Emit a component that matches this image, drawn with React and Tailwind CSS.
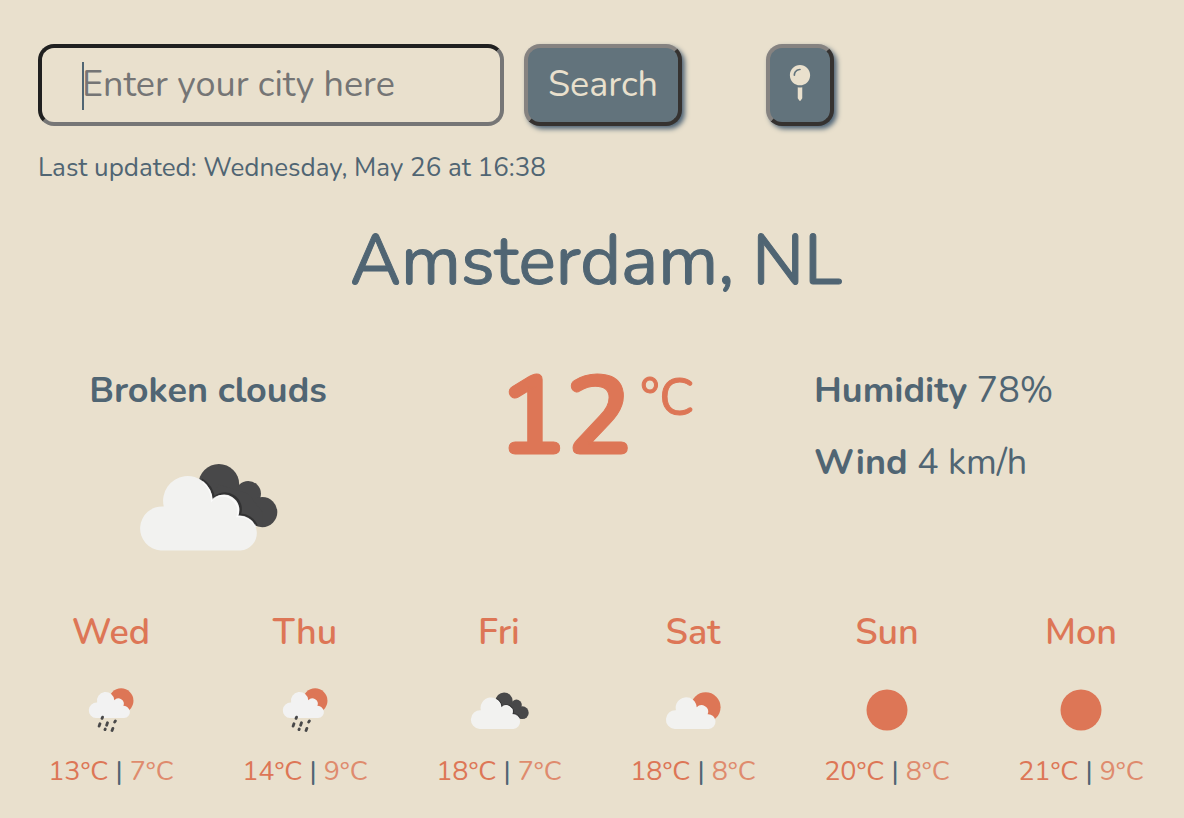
import { FaMapPin } from "react-icons/fa";

const forecast = [
  { day: "Wed", icon: "rain", max: 13, min: 7 },
  { day: "Thu", icon: "rain", max: 14, min: 9 },
  { day: "Fri", icon: "clouds", max: 18, min: 7 },
  { day: "Sat", icon: "partly", max: 18, min: 8 },
  { day: "Sun", icon: "sun", max: 20, min: 8 },
  { day: "Mon", icon: "sun", max: 21, min: 9 },
];

const cloudPath =
  "M126 300A66 66 0 1 1 135 168A74 74 0 1 1 281 148A46 46 0 0 1 358 196A52 52 0 1 1 365 300Z";

function Clouds({ className }) {
  return (
    <svg viewBox="58 38 419 264" className={className} role="img" aria-label="Broken clouds">
      <circle cx="300" cy="102" r="61" fill="#484849" />
      <circle cx="388" cy="130" r="38" fill="#484849" />
      <circle cx="430" cy="185" r="45" fill="#484849" />
      <path d="M300 102L388 130L430 185V229L380 210L270 150Z" fill="#484849" />
      <path d="M248 88A74 74 0 0 1 284 146A46 46 0 0 1 361 194A52 52 0 0 1 412 226" fill="none" stroke="#242425" strokeOpacity="0.6" strokeWidth="9" />
      <path d={cloudPath} fill="#f2f2f0" />
      <path d="M252 95A72 72 0 0 1 279 150A46 46 0 0 1 355 198A52 52 0 0 1 410 230" fill="none" stroke="#ffffff" strokeOpacity="0.7" strokeWidth="5" />
    </svg>
  );
}

function PartlyCloudy({ className }) {
  return (
    <svg viewBox="58 40 394 262" className={className} role="img" aria-label="Partly cloudy">
      <circle cx="344" cy="147" r="105" fill="#dd7656" />
      <path d={cloudPath} fill="#f2f2f0" />
    </svg>
  );
}

function Rain({ className }) {
  return (
    <svg viewBox="58 44 390 374" className={className} role="img" aria-label="Rain">
      <circle cx="339" cy="152" r="105" fill="#dd7656" />
      <path d={cloudPath} fill="#f2f2f2" />
      <g stroke="#484849" strokeWidth="24" strokeLinecap="round">
        <path d="M181 292L177 302M159 348L152 368M223 340L216 360M290 324L284 334M204 393L202 398M269 387L262 405" />
      </g>
    </svg>
  );
}

function Sun({ className }) {
  return (
    <svg viewBox="0 0 42 42" className={className} role="img" aria-label="Clear sky">
      <circle cx="21" cy="21" r="20.5" fill="#dd7656" />
    </svg>
  );
}

function DayIcon({ name }) {
  if (name === "rain") return <Rain className="h-11 w-12" />;
  if (name === "clouds") return <Clouds className="w-[59px]" />;
  if (name === "partly") return <PartlyCloudy className="w-14" />;
  return <Sun className="w-[42px]" />;
}

const buttonClass =
  "flex h-[82px] items-center justify-center rounded-2xl border-4 border-t-[#868381] border-l-[#868381] border-r-[#353230] border-b-[#353230] bg-[#62737c] text-[36px] text-[#e9e0cd] shadow-[3px_3px_5px_#4f6476]";

export default function App() {
  return (
    <main className="min-h-screen bg-[#e9e0cd] pt-11 pr-1.5 pb-6 pl-3.5 font-['Nunito','Lato',sans-serif] text-[#506573]">
      <form className="flex px-6" onSubmit={(e) => e.preventDefault()}>
        <div className="relative w-[466px]">
          <input
            type="text"
            aria-label="City"
            placeholder="Enter your city here"
            className="h-[82px] w-full rounded-2xl border-4 border-t-[#202020] border-l-[#202020] border-r-[#767676] border-b-[#767676] bg-transparent px-10 pb-0.5 text-[36px] placeholder-[#757575] caret-transparent outline-none"
          />
          <span className="absolute top-[18px] left-11 h-12 w-0.5 bg-[#506573]" />
        </div>
        <button type="submit" className={`${buttonClass} ml-5 w-[158px]`}>
          Search
        </button>
        <button type="button" aria-label="Use my location" className={`${buttonClass} ml-[84px] w-[68px] pb-1`}>
          <FaMapPin size={36} />
        </button>
      </form>

      <p className="mt-6 px-6 text-[26px] leading-9">Last updated: Wednesday, May 26 at 16:38</p>

      <h1 className="mt-[27px] text-center text-[70px] leading-24 [-webkit-text-stroke:1px]">Amsterdam, NL</h1>

      <section className="mt-[58px] grid grid-cols-3 text-[36px] leading-12">
        <div className="flex flex-col items-center gap-12">
          <h2 className="font-bold">Broken clouds</h2>
          <Clouds className="w-[140px]" />
        </div>
        <div className="flex items-start justify-center gap-2 pt-[3px] text-[#dd7656] [-webkit-text-stroke:1px]">
          <strong className="text-[112px] leading-24 font-bold">12</strong>
          <span className="text-[52px] leading-14">°C</span>
        </div>
        <div className="flex flex-col gap-6 pl-6">
          <p>
            <strong className="font-bold">Humidity</strong> 78%
          </p>
          <p>
            <strong className="font-bold">Wind</strong> 4 km/h
          </p>
        </div>
      </section>

      <section className="mt-[58px] grid grid-cols-6">
        {forecast.map((d) => (
          <div key={d.day} className="flex flex-col items-center">
            <h3 className="text-[36px] leading-12 font-semibold text-[#dd7656]">{d.day}</h3>
            <div className="mt-[31px] flex h-11 items-center">
              <DayIcon name={d.icon} />
            </div>
            <p className="mt-[22px] text-[27px] leading-9">
              <span className="text-[#dd7656]">{d.max}°C</span> | <span className="text-[#dd7656] opacity-80">{d.min}°C</span>
            </p>
          </div>
        ))}
      </section>
    </main>
  );
}
